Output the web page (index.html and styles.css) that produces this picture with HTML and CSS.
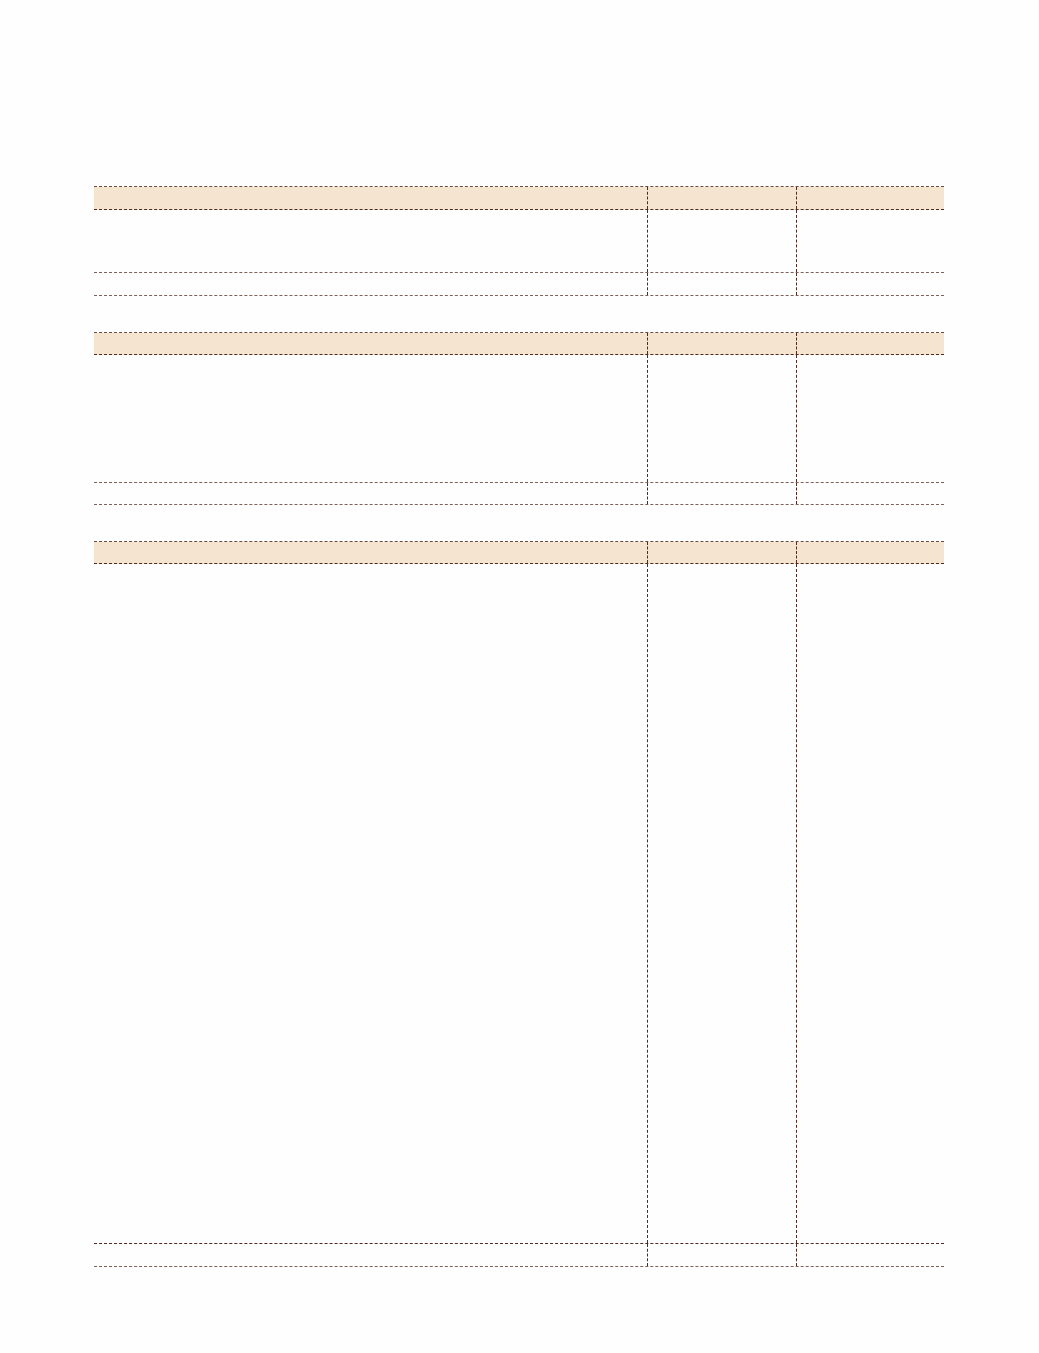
FILE: index.html
```html
<!DOCTYPE html>
<html lang="en">
<head>
<meta charset="utf-8">
<title>Tables</title>
<link rel="stylesheet" href="styles.css">
</head>
<body>
<main class="page">
  <section class="tbl">
    <div class="row head"><div class="cell"></div><div class="cell"></div><div class="cell"></div></div>
    <div class="row body b1"><div class="cell"></div><div class="cell"></div><div class="cell"></div></div>
    <div class="row total"><div class="cell"></div><div class="cell"></div><div class="cell"></div></div>
  </section>
  <section class="tbl">
    <div class="row head"><div class="cell"></div><div class="cell"></div><div class="cell"></div></div>
    <div class="row body b2"><div class="cell"></div><div class="cell"></div><div class="cell"></div></div>
    <div class="row total"><div class="cell"></div><div class="cell"></div><div class="cell"></div></div>
  </section>
  <section class="tbl">
    <div class="row head"><div class="cell"></div><div class="cell"></div><div class="cell"></div></div>
    <div class="row body b3"><div class="cell"></div><div class="cell"></div><div class="cell"></div></div>
    <div class="row total t3"><div class="cell"></div><div class="cell"></div><div class="cell"></div></div>
  </section>
</main>
</body>
</html>
```
FILE: styles.css
```css
html, body {
  margin: 0;
  padding: 0;
  background: #fefefe;
  font-family: "Liberation Sans", Arial, sans-serif;
}
.page {
  padding: 186px 0 0 94px;
  display: flex;
  flex-direction: column;
  gap: 36px;
}
.tbl {
  width: 850px;
  border-top: 1px dashed #6e4a3e;
}
.row {
  display: grid;
  grid-template-columns: 553px 149px 148px;
  border-bottom: 1px dashed #7e6258;
}
.cell + .cell {
  border-left: 1px dashed #4e2a20;
}
.head {
  background: #f5e4d0;
  border-bottom-color: #4e2a20;
}
.tbl:first-child .head { height: 22px; }
.tbl:not(:first-child) .head { height: 21px; }
.b1 { height: 62px; }
.b2 { height: 127px; }
.b3 { height: 679px; border-bottom-color: #4e2a20; }
.total { height: 22px; }
.tbl:nth-child(2) .total { height: 21px; }
```
